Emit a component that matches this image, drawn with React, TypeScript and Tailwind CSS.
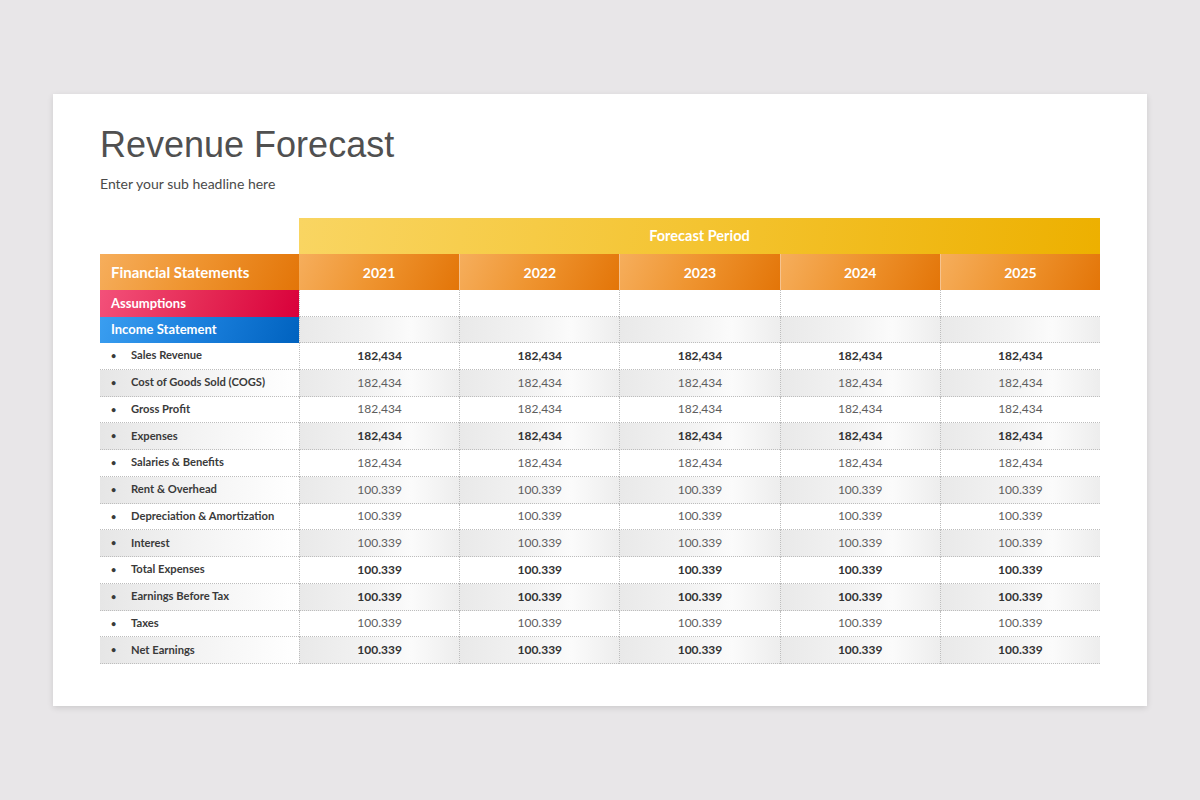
const years = ["2021", "2022", "2023", "2024", "2025"];

const rows = [
    { label: "Sales Revenue", value: "182,434", bold: true },
    { label: "Cost of Goods Sold (COGS)", value: "182,434", bold: false },
    { label: "Gross Profit", value: "182,434", bold: false },
    { label: "Expenses", value: "182,434", bold: true },
    { label: "Salaries & Benefits", value: "182,434", bold: false },
    { label: "Rent & Overhead", value: "100.339", bold: false },
    { label: "Depreciation & Amortization", value: "100.339", bold: false },
    { label: "Interest", value: "100.339", bold: false },
    { label: "Total Expenses", value: "100.339", bold: true },
    { label: "Earnings Before Tax", value: "100.339", bold: true },
    { label: "Taxes", value: "100.339", bold: false },
    { label: "Net Earnings", value: "100.339", bold: true },
];

const grayCell =
    "bg-[linear-gradient(90deg,#e9e9e9_0%,#f3f3f3_45%,#fbfbfb_70%,#ededed_100%)]";
const grayLabel = "bg-[linear-gradient(90deg,#e6e6e6_0%,#f4f4f4_50%,#ffffff_100%)]";
const orange = "bg-[linear-gradient(115deg,#f6ae5c_0%,#ef9531_45%,#e37508_100%)]";

const ValueCell = ({ children, gray, bold, h }: { children?: string; gray?: boolean; bold?: boolean; h: string }) => (
    <div
        className={`flex items-center justify-center border-l border-b border-dotted border-[#bdbdbd] ${h} ${gray ? grayCell : "bg-white"} ${bold ? "font-bold text-[#333]" : "text-[#5e5e5e]"} text-[12px]`}
    >
        {children}
    </div>
);

const App = () => {
    return (
        <div className="min-h-screen w-full bg-[#e8e6e8] pt-[94px] font-['Lato',sans-serif]">
            <div className="ml-[53px] w-[1094px] h-[612px] bg-white shadow-[0_2px_6px_rgba(0,0,0,0.12)] px-[47px] pt-[31px]">
                <h1 className="font-['Liberation_Sans',Arial,sans-serif] text-[36px] leading-[40px] text-[#505050]">
                    Revenue Forecast
                </h1>
                <p className="mt-[10px] text-[14px] leading-[18px] text-[#4a4a4a]">Enter your sub headline here</p>

                <div className="mt-[25px] grid grid-cols-[199px_repeat(5,1fr)] w-[1000px]">
                    {/* forecast period */}
                    <div className="h-[36px]" />
                    <div className="col-span-5 h-[36px] flex items-center justify-center bg-[linear-gradient(100deg,#f9d562_0%,#f4c431_50%,#edb000_100%)] text-white font-bold text-[14.5px]">
                        Forecast Period
                    </div>

                    {/* header */}
                    <div className={`h-[36px] flex items-center pl-[11px] text-white font-bold text-[15px] ${orange}`}>
                        Financial Statements
                    </div>
                    {years.map((y, i) => (
                        <div
                            key={y}
                            className={`h-[36px] flex items-center justify-center text-white font-bold text-[14px] ${orange} ${i > 0 ? "border-l border-[#f6c38f]" : ""}`}
                        >
                            {y}
                        </div>
                    ))}

                    {/* assumptions */}
                    <div className="h-[27px] flex items-center pl-[11px] text-white font-bold text-[13px] bg-[linear-gradient(110deg,#f3517a_0%,#e52a55_50%,#d9003a_100%)]">
                        Assumptions
                    </div>
                    {years.map((y) => (
                        <ValueCell key={y} h="h-[27px]" />
                    ))}

                    {/* income statement */}
                    <div className="h-[26px] flex items-center pl-[11px] text-white font-bold text-[13px] bg-[linear-gradient(110deg,#3a9ef0_0%,#1a7fdc_50%,#0062bf_100%)]">
                        Income Statement
                    </div>
                    {years.map((y) => (
                        <ValueCell key={y} h="h-[26px]" gray />
                    ))}

                    {rows.map((r, idx) => {
                        const gray = idx % 2 === 1;
                        return [
                            <div
                                key={r.label}
                                className={`h-[26.75px] flex items-center border-b border-dotted border-[#bdbdbd] text-[11.2px] font-bold text-[#3a3a3a] ${gray ? grayLabel : "bg-white"}`}
                            >
                                <span className="w-[31px] pl-[11px] text-[9px]">•</span>
                                <span>{r.label}</span>
                            </div>,
                            ...years.map((y) => (
                                <ValueCell key={r.label + y} h="h-[26.75px]" gray={gray} bold={r.bold}>
                                    {r.value}
                                </ValueCell>
                            )),
                        ];
                    })}
                </div>
            </div>
        </div>
    );
};

export default App;
